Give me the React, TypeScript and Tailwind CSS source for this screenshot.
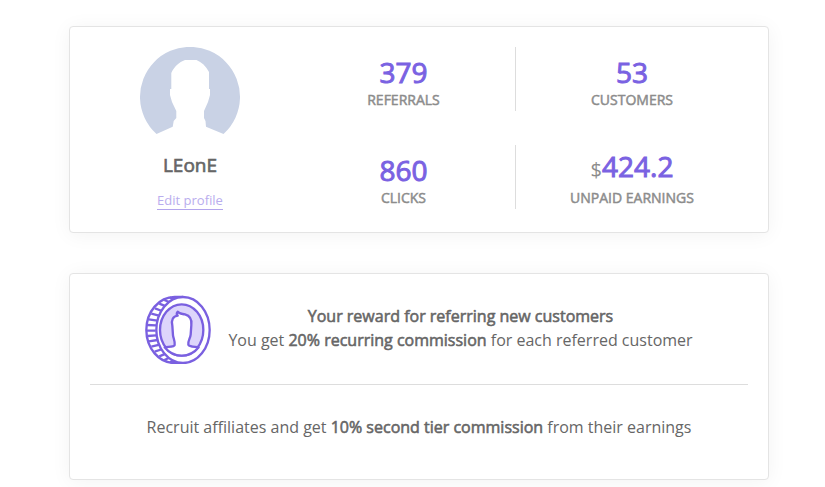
import { FC, ReactNode } from "react";

interface StatProps {
  label: string;
  value: string;
  prefix?: string;
  divided?: boolean;
}

const stats: StatProps[] = [
  { label: "Referrals", value: "379", divided: true },
  { label: "Customers", value: "53" },
  { label: "Clicks", value: "860", divided: true },
  { label: "Unpaid earnings", value: "424.2", prefix: "$" },
];

const Card: FC<{ children: ReactNode }> = ({ children }) => (
  <section className="rounded border border-[#e4e4e4] bg-white p-5 shadow-[0_2px_20px_rgba(0,0,0,0.05)]">
    {children}
  </section>
);

const Strong: FC<{ children: ReactNode }> = ({ children }) => (
  <strong className="font-normal [-webkit-text-stroke:0.035em_currentColor]">
    {children}
  </strong>
);

const Avatar: FC = () => (
  <svg viewBox="0 0 100 100" className="size-[100px]" aria-hidden="true">
    <path
      fill="#c9d2e5"
      d="M16.5 87A50 50 0 1 1 83.5 87L66 79.7L65.5 74L64 71V64L68 55L70 48V42H69V25C66 19 61.5 15 56.5 13H45C39 15 34 20 31.3 26V42H30V48L32 55L36.3 64V71L33.7 74L32.7 79.7Z"
    />
  </svg>
);

const Coin: FC = () => (
  <svg
    viewBox="33 30 201 207"
    className="h-[69px] w-[67px] shrink-0"
    fill="none"
    stroke="#7a60e0"
    strokeWidth="7"
    strokeLinejoin="round"
    aria-hidden="true"
  >
    <path d="M147 36H122C75 36 37 80 37 135S75 234 122 234H147" />
    <path d="M107 38L128 45M91 45L112 54M76 56L98 65M63 70L84 78M52 86L75 92M44 103L70 107M39 120L66 121M38 137L65 137M40 153L67 151M44 169L71 165M52 185L77 179M62 200L86 192M76 214L97 205M91 225L111 216M107 232L127 225" />
    <ellipse cx="147" cy="135" rx="80" ry="99" fill="#fff" />
    <ellipse cx="143" cy="135" rx="65" ry="77" fill="#ddd5fb" />
    <path
      fill="#fff"
      d="M92 187C105 185 121 186 122 180C124 170 118 160 117 151L115 122C111 105 117 94 131 92C127 88 127 85 131 80C135 87 143 86 153 88C168 92 174 103 172 120L170 149C169 160 161 168 163 179C165 186 180 185 194 187C180 205 162 212 143 212S106 205 92 187Z"
    />
  </svg>
);

const Stat: FC<StatProps> = ({ label, value, prefix, divided }) => (
  <div
    className={`flex h-16 flex-col items-center justify-end pb-px ${
      divided ? "border-r border-[#dddddd]" : ""
    }`}
  >
    <dt className="order-last text-sm leading-5 text-[#8c8c8c] uppercase">
      <Strong>{label}</Strong>
    </dt>
    <dd className="flex items-baseline text-[28px] leading-9 text-[#7a62e2]">
      {prefix && (
        <span className="text-xl leading-9 text-[#8c8c8c]">{prefix}</span>
      )}
      <Strong>{value}</Strong>
    </dd>
  </div>
);

const App: FC = () => {
  return (
    <main className="flex flex-col gap-10 pt-[26px] pr-14 pb-2 pl-[69px] font-['Open_Sans',sans-serif] text-base leading-6 text-[#666666]">
      <Card>
        <div className="grid grid-cols-[200fr_458fr]">
          <div className="flex flex-col items-center pb-0.5">
            <Avatar />
            <h2 className="mt-1 text-[19px] leading-7">
              <Strong>LEonE</Strong>
            </h2>
            <a
              href="#profile"
              className="mt-3 border-b border-[#b3a5ec] text-[13px] leading-[18px] text-[#b9adee]"
            >
              Edit profile
            </a>
          </div>
          <dl className="grid grid-cols-[224fr_232fr] content-start gap-y-[34px] pl-0.5">
            {stats.map((stat) => (
              <Stat key={stat.label} {...stat} />
            ))}
          </dl>
        </div>
      </Card>

      <Card>
        <div className="flex items-center justify-center gap-4 border-b border-[#dddddd] pt-px pb-5">
          <Coin />
          <p className="pb-1 text-center">
            <Strong>Your reward for referring new customers</Strong>
            <br />
            You get <Strong>20% recurring commission</Strong> for each referred
            customer
          </p>
        </div>
        <p className="pt-[30px] pb-5 text-center">
          Recruit affiliates and get <Strong>10% second tier commission</Strong>{" "}
          from their earnings
        </p>
      </Card>
    </main>
  );
};

export default App;
